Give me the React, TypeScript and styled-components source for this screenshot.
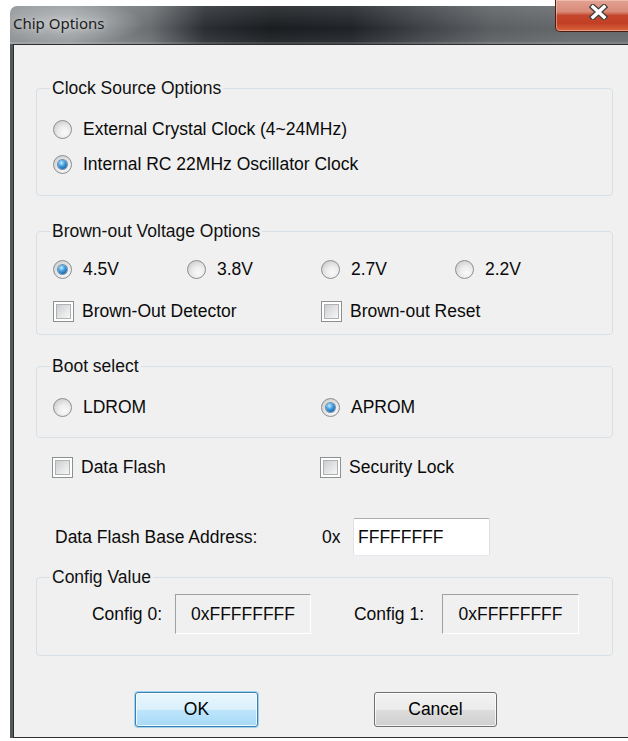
import React from "react";
import styled, { createGlobalStyle } from "styled-components";

const GlobalStyle = createGlobalStyle`
  html, body {
    margin: 0;
    padding: 0;
    background: #ffffff;
    overflow: hidden;
  }
  body {
    font-family: "Liberation Sans", Arial, sans-serif;
    font-size: 17.5px;
    color: #0a0a0a;
  }
`;

const Screen = styled.div`
  width: 628px;
  height: 741px;
  box-sizing: border-box;
  padding: 6px 0 0 10px;
  overflow: hidden;
`;

const Window = styled.div`
  width: 637px;
  display: flex;
  flex-direction: column;
`;

/* Aero glass caption: light near the title, dark in the middle */
const TitleBar = styled.div`
  height: 38px;
  display: flex;
  align-items: flex-start;
  padding-left: 3px;
  border-top-left-radius: 7px;
  background:
    radial-gradient(ellipse 80px 22px at 55px 17px, rgba(205, 208, 210, 0.75), rgba(205, 208, 210, 0) 100%),
    linear-gradient(180deg, rgba(255, 255, 255, 0.12) 0%, rgba(255, 255, 255, 0) 60%, rgba(255, 255, 255, 0.08) 100%),
    linear-gradient(90deg, #8b8f92 0px, #8e9295 60px, #6a6e71 140px, #2a2d31 195px, #1a1d20 260px, #1f2327 340px, #3e4246 410px, #5a5e61 480px, #64686b 560px);
  box-shadow: inset 0 -2px 0 rgba(255, 255, 255, 0.12);
`;

const TitleText = styled.div`
  flex: 1;
  padding-top: 7px;
  line-height: 20px;
  font-family: "Noto Sans", "Open Sans", sans-serif;
  font-size: 15px;
  color: #1c1c1c;
  text-shadow: 0 0 6px rgba(255, 255, 255, 0.6);
`;

/* caption close button rises a little above the glass edge */
const CloseButton = styled.div`
  width: 86px;
  height: 32px;
  margin-top: -6px;
  margin-right: 6px;
  box-sizing: border-box;
  display: flex;
  align-items: flex-start;
  justify-content: center;
  padding-top: 4px;
  border: 1px solid #4d1a14;
  border-top: none;
  border-radius: 0 0 5px 5px;
  background: linear-gradient(180deg, #e2a293 0%, #d98a78 38%, #c5462e 50%, #c13f24 75%, #d8663b 100%);
  box-shadow: inset 0 0 0 1px rgba(255, 220, 210, 0.45);
`;

const FrameSide = styled.div`
  border-left: 3px solid #55595c;
`;

const Client = styled.div`
  background: #f0f0f0;
  border: 1px solid #2c2e30;
  border-right: none;
  padding: 0 0 10px 22px;
  display: flex;
  flex-direction: column;
`;

const GroupBox = styled.fieldset<{ $mt: number; $pt: number; $pb: number; $pl?: number }>`
  margin: ${(p) => p.$mt}px 0 0 0;
  padding: ${(p) => p.$pt}px 0 ${(p) => p.$pb}px ${(p) => p.$pl ?? 16}px;
  width: 577px;
  min-width: 0;
  box-sizing: border-box;
  border: 1px solid #d5dfe5;
  border-radius: 4px;
  display: flex;
  flex-direction: column;
`;

const GroupTitle = styled.legend<{ $indent?: number }>`
  padding: 0 2px;
  margin-left: ${(p) => p.$indent ?? -3}px;
  line-height: 20px;
  color: #111111;
`;

const OptionRow = styled.div<{ $mt?: number; $pl?: number }>`
  display: grid;
  grid-template-columns: repeat(4, 134px);
  height: 24px;
  align-items: center;
  margin-top: ${(p) => p.$mt ?? 0}px;
  padding-left: ${(p) => p.$pl ?? 0}px;
`;

const Option = styled.label<{ $span?: number; $gap?: number }>`
  grid-column: span ${(p) => p.$span ?? 1};
  display: flex;
  align-items: center;
  gap: ${(p) => p.$gap ?? 11}px;
  white-space: nowrap;
  line-height: 20px;
`;

const RadioDot = styled.span<{ $checked?: boolean }>`
  width: 19px;
  height: 19px;
  box-sizing: border-box;
  border-radius: 50%;
  border: 1px solid #8c8e90;
  background: radial-gradient(circle at 62% 68%, #fafafa 0%, #ececec 40%, #cfcfcf 80%, #bdbdbd 100%);
  display: flex;
  align-items: center;
  justify-content: center;
  flex-shrink: 0;

  &::after {
    content: "";
    width: 9px;
    height: 9px;
    border-radius: 50%;
    display: ${(p) => (p.$checked ? "block" : "none")};
    background: radial-gradient(circle at 38% 32%, #c8ecff 0%, #4fa9e8 35%, #1463a8 75%, #0c3f73 100%);
    box-shadow: 0 0 0 1px rgba(16, 70, 120, 0.55);
  }
`;

const CheckBox = styled.span`
  width: 21px;
  height: 21px;
  box-sizing: border-box;
  border: 1px solid #8e8f8f;
  background: #ffffff;
  padding: 2px;
  flex-shrink: 0;

  &::after {
    content: "";
    display: block;
    width: 100%;
    height: 100%;
    box-sizing: border-box;
    border: 1px solid #aeb2b5;
    background: linear-gradient(135deg, #cbcdcf 0%, #e2e3e4 50%, #f6f6f6 100%);
  }
`;

const AddressRow = styled.div`
  display: grid;
  grid-template-columns: 267px 31px 137px;
  align-items: center;
  height: 38px;
  margin-top: 39px;
  padding-left: 19px;
`;

const EditBox = styled.div`
  height: 38px;
  box-sizing: border-box;
  border: 1px solid;
  border-color: #abadb3 #dbdfe6 #e3e9ef #e2e3ea;
  border-radius: 2px;
  background: #ffffff;
  padding-left: 4px;
  display: flex;
  align-items: center;
`;

const ConfigRow = styled.div`
  display: grid;
  grid-template-columns: 138px 136px 131px 137px;
  align-items: center;
  height: 40px;
`;

const ConfigLabel = styled.span<{ $pr: number }>`
  text-align: right;
  padding-right: ${(p) => p.$pr}px;
`;

const StaticValue = styled.div`
  height: 40px;
  box-sizing: border-box;
  border: 1px solid;
  border-color: #a0a0a0 #ffffff #ffffff #a0a0a0;
  display: flex;
  align-items: center;
  justify-content: center;
`;

const ButtonRow = styled.div`
  display: flex;
  gap: 116px;
  margin-top: 36px;
  padding-left: 99px;
`;

const PushButton = styled.button<{ $default?: boolean }>`
  width: 123px;
  height: 35px;
  box-sizing: border-box;
  font: inherit;
  color: #000000;
  border-radius: 3px;
  border: 1px solid ${(p) => (p.$default ? "#3c7fb1" : "#707070")};
  background: ${(p) =>
    p.$default
      ? "linear-gradient(180deg, #eaf6fd 0%, #d9f0fc 50%, #bee6fd 50%, #a7d9f5 100%)"
      : "linear-gradient(180deg, #f2f2f2 0%, #ebebeb 50%, #dddddd 50%, #cfcfcf 100%)"};
  box-shadow: ${(p) =>
    p.$default
      ? "inset 0 0 0 1px rgba(255,255,255,0.8), 0 0 0 1px rgba(72, 184, 240, 0.5)"
      : "inset 0 0 0 1px rgba(255,255,255,0.75)"};
  padding: 0;
`;

const CloseGlyph = () => (
  <svg width="19" height="16" viewBox="0 0 19 16">
    <path d="M4 3 L15 13 M15 3 L4 13" stroke="#47413f" strokeWidth="6" strokeLinecap="square" fill="none" />
    <path d="M4 3 L15 13 M15 3 L4 13" stroke="#ffffff" strokeWidth="3.4" strokeLinecap="square" fill="none" />
  </svg>
);

const Radio: React.FC<{ label: string; checked?: boolean; span?: number }> = ({ label, checked, span }) => (
  <Option $span={span} $gap={11}>
    <RadioDot $checked={checked} />
    {label}
  </Option>
);

const Check: React.FC<{ label: string; span?: number }> = ({ label, span }) => (
  <Option $span={span} $gap={8}>
    <CheckBox />
    {label}
  </Option>
);

export default function App() {
  return (
    <Screen>
      <GlobalStyle />
      <Window>
        <TitleBar>
          <TitleText>Chip Options</TitleText>
          <CloseButton>
            <CloseGlyph />
          </CloseButton>
        </TitleBar>
        <FrameSide>
          <Client>
            <GroupBox $mt={33} $pt={19} $pb={19}>
              <GroupTitle>Clock Source Options</GroupTitle>
              <OptionRow>
                <Radio label="External Crystal Clock (4~24MHz)" span={4} />
              </OptionRow>
              <OptionRow $mt={11}>
                <Radio label="Internal RC 22MHz Oscillator Clock" checked span={4} />
              </OptionRow>
            </GroupBox>

            <GroupBox $mt={25} $pt={16} $pb={11}>
              <GroupTitle>Brown-out Voltage Options</GroupTitle>
              <OptionRow>
                <Radio label="4.5V" checked />
                <Radio label="3.8V" />
                <Radio label="2.7V" />
                <Radio label="2.2V" />
              </OptionRow>
              <OptionRow $mt={18}>
                <Check label="Brown-Out Detector" span={2} />
                <Check label="Brown-out Reset" span={2} />
              </OptionRow>
            </GroupBox>

            <GroupBox $mt={21} $pt={19} $pb={18}>
              <GroupTitle>Boot select</GroupTitle>
              <OptionRow>
                <Radio label="LDROM" span={2} />
                <Radio label="APROM" checked span={2} />
              </OptionRow>
            </GroupBox>

            <OptionRow $mt={17} $pl={16}>
              <Check label="Data Flash" span={2} />
              <Check label="Security Lock" span={2} />
            </OptionRow>

            <AddressRow>
              <span>Data Flash Base Address:</span>
              <span>0x</span>
              <EditBox>FFFFFFFF</EditBox>
            </AddressRow>

            <GroupBox $mt={11} $pt={7} $pb={21} $pl={0}>
              <GroupTitle $indent={13}>Config Value</GroupTitle>
              <ConfigRow>
                <ConfigLabel $pr={13}>Config 0:</ConfigLabel>
                <StaticValue>0xFFFFFFFF</StaticValue>
                <ConfigLabel $pr={18}>Config 1:</ConfigLabel>
                <StaticValue>0xFFFFFFFF</StaticValue>
              </ConfigRow>
            </GroupBox>

            <ButtonRow>
              <PushButton $default>OK</PushButton>
              <PushButton>Cancel</PushButton>
            </ButtonRow>
          </Client>
        </FrameSide>
      </Window>
    </Screen>
  );
}
